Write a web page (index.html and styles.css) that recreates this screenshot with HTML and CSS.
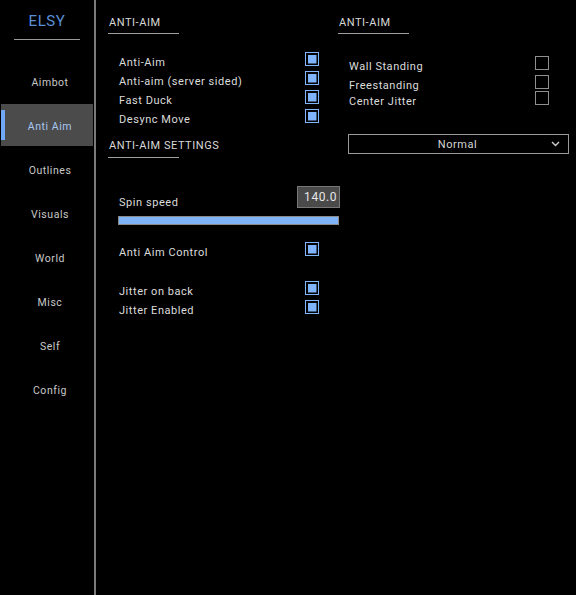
FILE: index.html
```html
<!DOCTYPE html>
<html>
<head>
<meta charset="utf-8">
<link rel="stylesheet" href="styles.css">
</head>
<body>
<div class="app">
  <aside class="sidebar">
    <div class="logo">ELSY</div>
    <nav class="nav">
      <div class="nav-item">Aimbot</div>
      <div class="nav-item active">Anti Aim</div>
      <div class="nav-item">Outlines</div>
      <div class="nav-item">Visuals</div>
      <div class="nav-item">World</div>
      <div class="nav-item">Misc</div>
      <div class="nav-item">Self</div>
      <div class="nav-item">Config</div>
    </nav>
  </aside>
  <main class="main">
    <section class="col col-left">
      <div class="head">ANTI-AIM</div>
      <div class="rows first-rows">
        <div class="row"><span>Anti-Aim</span><i class="cb on"></i></div>
        <div class="row"><span>Anti-aim (server sided)</span><i class="cb on"></i></div>
        <div class="row"><span>Fast Duck</span><i class="cb on"></i></div>
        <div class="row"><span>Desync Move</span><i class="cb on"></i></div>
      </div>
      <div class="head head-settings">ANTI-AIM SETTINGS</div>
      <div class="slider">
        <div class="slider-head">
          <span class="slider-label">Spin speed</span>
          <span class="slider-value">140.0</span>
        </div>
        <div class="slider-track"><div class="slider-fill"></div></div>
      </div>
      <div class="rows control-rows">
        <div class="row"><span>Anti Aim Control</span><i class="cb on"></i></div>
      </div>
      <div class="rows jitter-rows">
        <div class="row"><span>Jitter on back</span><i class="cb on"></i></div>
        <div class="row"><span>Jitter Enabled</span><i class="cb on"></i></div>
      </div>
    </section>
    <section class="col col-right">
      <div class="head">ANTI-AIM</div>
      <div class="rows right-rows">
        <div class="row"><span>Wall Standing</span><i class="cb"></i></div>
        <div class="row"><span>Freestanding</span><i class="cb"></i></div>
        <div class="row tight"><span>Center Jitter</span><i class="cb"></i></div>
      </div>
      <div class="select">
        <span class="select-text">Normal</span>
        <svg class="chev" width="9" height="6" viewBox="0 0 9 6"><path d="M1 1 L4.5 4.5 L8 1" fill="none" stroke="#cfcfcf" stroke-width="1.4"/></svg>
      </div>
    </section>
  </main>
</div>
</body>
</html>
```
FILE: styles.css
```css
html, body {
  margin: 0;
  padding: 0;
  background: #000;
}
body {
  font-family: Roboto, "Liberation Sans", sans-serif;
  font-size: 11px;
  color: #dcdcdc;
  letter-spacing: 0.55px;
}
.app {
  display: flex;
  width: 576px;
  height: 595px;
}
.sidebar {
  width: 94px;
  flex: none;
  border-right: 2px solid #7a7a7a;
  display: flex;
  flex-direction: column;
}
.logo {
  margin: 14px 14px 0;
  width: 66px;
  text-align: center;
  color: #5a8fd6;
  font-size: 15px;
  line-height: 15px;
  letter-spacing: 0.6px;
  padding-bottom: 10px;
  border-bottom: 1px solid #9a9a9a;
}
.nav {
  margin-top: 20px;
  display: flex;
  flex-direction: column;
  gap: 2px;
}
.nav-item {
  position: relative;
  margin-left: 1px;
  width: 92px;
  height: 42px;
  box-sizing: border-box;
  padding-left: 6px;
  padding-top: 2px;
  display: flex;
  align-items: center;
  justify-content: center;
  color: #c8c8c8;
  font-size: 10.5px;
}
.nav-item.active {
  background: #4b4b4b;
  color: #a9c6ef;
}
.nav-item.active::before {
  content: "";
  position: absolute;
  left: 0;
  top: 6px;
  width: 4px;
  height: 30px;
  background: #6fa8f4;
}
.main {
  flex: 1;
  display: flex;
  padding-left: 12px;
}
.col {
  width: 230px;
  flex: none;
  display: flex;
  flex-direction: column;
}
.head {
  width: 71px;
  box-sizing: border-box;
  padding: 17px 0 4px 1px;
  line-height: 12px;
  border-bottom: 1px solid #a0a0a0;
  white-space: nowrap;
  color: #d8d8d8;
}
.head-settings {
  padding-top: 12px;
  padding-bottom: 5px;
}
.rows {
  display: flex;
  flex-direction: column;
}
.row {
  height: 19px;
  display: flex;
  justify-content: space-between;
  align-items: flex-start;
}
.row span {
  line-height: 19px;
  padding-top: 1px;
  white-space: nowrap;
}
.col-left .row {
  padding-left: 11px;
  width: 200px;
}
.first-rows { margin-top: 18px; }
.control-rows { margin-top: 17px; }
.jitter-rows { margin-top: 20px; }
.cb {
  display: block;
  width: 14px;
  height: 14px;
  box-sizing: border-box;
  border: 1px solid #8f8f8f;
  flex: none;
}
.cb.on {
  border: 1.5px solid #80b6ff;
  padding: 1.5px;
  background: #7fb3fb content-box;
  box-shadow: inset 0 0 0 1.5px #000;
}
.slider {
  margin-top: 28px;
  margin-left: 10px;
  width: 222px;
}
.slider-head {
  display: flex;
  justify-content: space-between;
  align-items: flex-end;
}
.slider-label {
  padding-left: 1px;
  line-height: 12px;
  position: relative;
  top: 1px;
}
.slider-value {
  width: 43px;
  height: 22px;
  box-sizing: border-box;
  background: #4a4a4a;
  border: 1px solid #777;
  color: #e6e6e6;
  font-size: 12px;
  text-align: right;
  padding-right: 2px;
  line-height: 20px;
}
.slider-track {
  margin-top: 8px;
  width: 221px;
  height: 9px;
  box-sizing: border-box;
  border: 1px solid #8a8a8a;
  background: #000;
}
.slider-fill {
  width: 100%;
  height: 100%;
  background: #7fb3f8;
}
.right-rows {
  margin-top: 22px;
}
.col-right .row {
  padding-left: 11px;
  width: 200px;
}
.col-right .row.tight {
  margin-top: -3px;
}
.select {
  margin-top: 24px;
  margin-left: 10px;
  width: 221px;
  height: 20px;
  box-sizing: border-box;
  border: 1px solid #9a9a9a;
  display: flex;
  align-items: center;
  justify-content: center;
  position: relative;
}
.select-text {
  color: #d6d6d6;
  padding-right: 2px;
  padding-top: 1px;
}
.chev {
  position: absolute;
  right: 8px;
  top: 6px;
}
```
